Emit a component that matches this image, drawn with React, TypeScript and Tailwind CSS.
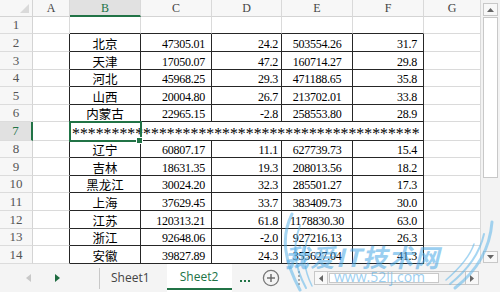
import React from "react";

const W = [
  "w-[33px]",
  "w-[37px]",
  "w-[71px]",
  "w-[71px]",
  "w-[70px]",
  "w-[71px]",
  "w-[71px]",
  "w-[57px]",
];
const HEIGHTS = [17, 18, 18, 17, 18, 17, 19, 17, 18, 17, 18, 18, 17, 18];
const HCLS: Record<number, string> = {
  17: "h-[17px]",
  18: "h-[18px]",
  19: "h-[19px]",
};

type Row = [string, string, string, string, string];
const TOP: Row[] = [
  ["北京", "47305.01", "24.2", "503554.26", "31.7"],
  ["天津", "17050.07", "47.2", "160714.27", "29.8"],
  ["河北", "45968.25", "29.3", "471188.65", "35.8"],
  ["山西", "20004.80", "26.7", "213702.01", "33.8"],
  ["内蒙古", "22965.15", "-2.8", "258553.80", "28.9"],
];
const BOTTOM: Row[] = [
  ["辽宁", "60807.17", "11.1", "627739.73", "15.4"],
  ["吉林", "18631.35", "19.3", "208013.56", "18.2"],
  ["黑龙江", "30024.20", "32.3", "285501.27", "17.3"],
  ["上海", "37629.45", "33.7", "383409.73", "30.0"],
  ["江苏", "120313.21", "61.8", "1178830.30", "63.0"],
  ["浙江", "92648.06", "-2.0", "927216.13", "26.3"],
  ["安徽", "39827.89", "24.3", "355627.04", "41.3"],
];

const SERIF = { fontFamily: '"Liberation Serif", "Times New Roman", serif' };
const CJK = { fontFamily: '"Noto Sans CJK SC", "Noto Sans", sans-serif' };
const UI = { fontFamily: '"Open Sans", "Noto Sans", sans-serif' };

function rowData(r: number): Row | null {
  if (r >= 2 && r <= 6) return TOP[r - 2];
  if (r >= 8 && r <= 14) return BOTTOM[r - 8];
  return null;
}

function HeaderRow() {
  const letters = ["A", "B", "C", "D", "E", "F", "G"];
  return (
    <div className="flex h-[17px]">
      <div className="relative w-[33px] shrink-0 border-r border-b border-[#d4d4d4] bg-[#f7f7f7]">
        <svg className="absolute right-[3px] bottom-[3px]" width="9" height="9" viewBox="0 0 9 9">
          <polygon points="9,0 9,9 0,9" fill="#dadada" />
        </svg>
      </div>
      {letters.map((l, i) => {
        const sel = l === "B";
        return (
          <div
            key={l}
            className={`${W[i + 1]} shrink-0 flex items-center justify-center text-[12px] border-r border-[#d9d9d9] ${
              sel
                ? "bg-[#e1e1e1] text-[#217346] border-b-2 border-b-[#217346]"
                : "bg-[#f7f7f7] text-[#444] border-b border-b-[#d4d4d4]"
            }`}
            style={SERIF}
          >
            {l}
          </div>
        );
      })}
    </div>
  );
}

const GRID_R = "border-r-[#dadada]";
const GRID_B = "border-b-[#dadada]";
const BLK_R = "border-r-[#262626]";
const BLK_B = "border-b-[#262626]";

function RowHeader({ r, h }: { r: number; h: string }) {
  const sel = r === 7;
  return (
    <div
      className={`${h} w-[33px] shrink-0 flex items-center justify-center text-[13px] border-b border-b-[#dcdcdc] ${
        sel
          ? "bg-[#e1e1e1] text-[#217346] border-r-2 border-r-[#217346]"
          : "bg-[#f7f7f7] text-[#555] border-r border-r-[#d4d4d4]"
      }`}
      style={SERIF}
    >
      {r}
    </div>
  );
}

function DataRow({ r }: { r: number }) {
  const h = HCLS[HEIGHTS[r - 1]];
  const d = rowData(r);
  const inTable = r >= 2 && r <= 14;

  if (r === 7) {
    return (
      <div className={`flex ${h}`}>
        <RowHeader r={r} h={h} />
        <div className={`${W[1]} shrink-0 bg-white border-r border-b ${BLK_R} ${GRID_B}`} />
        <div className={`relative w-[354px] shrink-0 bg-white border-r border-b ${BLK_R} ${BLK_B}`}>
          <div
            className="whitespace-nowrap pl-[2px] pt-[4px] text-[15.8px] leading-[16px] text-black"
            style={SERIF}
          >
            {"*".repeat(44)}
          </div>
          <div className="pointer-events-none absolute left-[-1px] top-[-1px] z-10 h-[21px] w-[73px] border-2 border-[#217346]" />
          <div className="absolute left-[66px] top-[15px] z-20 h-[7px] w-[7px] border border-white bg-[#217346]" />
        </div>
        <div className={`${W[7]} shrink-0 bg-white border-r border-b ${GRID_R} ${GRID_B}`} />
      </div>
    );
  }

  const cells = [];
  for (let c = 1; c <= 7; c++) {
    const rightBlack = inTable && c >= 1 && c <= 6;
    const bottomBlack = r >= 1 && r <= 14 && c >= 2 && c <= 6;
    const base = `${W[c]} shrink-0 bg-white border-r border-b ${rightBlack ? BLK_R : GRID_R} ${
      bottomBlack ? BLK_B : GRID_B
    } flex items-center pt-[2px] text-black whitespace-nowrap overflow-hidden`;
    let content: React.ReactNode = null;
    let extra = "";
    let style: React.CSSProperties | undefined;
    if (d && c >= 2 && c <= 6) {
      const v = d[c - 2];
      content = v;
      if (c === 2) {
        extra = "justify-center text-[12.5px] leading-[14px]";
        style = CJK;
      } else if (c === 5) {
        extra = "justify-center text-[12px] tracking-[-0.25px] leading-[14px]";
        style = SERIF;
      } else if (c === 4) {
        extra = "justify-end pr-[3px] text-[12px] tracking-[-0.25px] leading-[14px]";
        style = SERIF;
      } else {
        extra = "justify-end pr-[6px] text-[12px] tracking-[-0.25px] leading-[14px]";
        style = SERIF;
      }
    }
    cells.push(
      <div key={c} className={`${base} ${extra}`} style={style}>
        {content}
      </div>
    );
  }
  return (
    <div className={`flex ${h}`}>
      <RowHeader r={r} h={h} />
      {cells}
    </div>
  );
}

function VScroll() {
  return (
    <div className="flex h-[264px] w-[19px] shrink-0 flex-col bg-[#f3f3f3] px-[2px] pt-[3px] pb-[1px]">
      <div className="flex h-[13px] items-center justify-center border border-[#c8c8c8] bg-[#f8f8f8]">
        <svg width="7" height="4" viewBox="0 0 7 4">
          <polygon points="0,4 7,4 3.5,0" fill="#666" />
        </svg>
      </div>
      <div className="mt-[1px] h-[161px] border border-[#c8c8c8] bg-white" />
      <div className="flex-1" />
      <div className="flex h-[12px] items-center justify-center border border-[#c8c8c8] bg-[#f8f8f8]">
        <svg width="7" height="4" viewBox="0 0 7 4">
          <polygon points="0,0 7,0 3.5,4" fill="#666" />
        </svg>
      </div>
    </div>
  );
}

function TabBar() {
  return (
    <div className="flex h-[28px] items-center bg-[#f4f4f4]" style={UI}>
      <div className="flex w-[99px] items-center">
        <svg className="ml-[26px]" width="5" height="8" viewBox="0 0 5 8">
          <polygon points="5,0 5,8 0,4" fill="#c8c8c8" />
        </svg>
        <svg className="ml-[24px]" width="5" height="8" viewBox="0 0 5 8">
          <polygon points="0,0 0,8 5,4" fill="#1e6b40" />
        </svg>
      </div>
      <div className="h-[21px] w-px bg-[#c8c8c8]" />
      <div className="ml-[11px] text-[12px] text-[#444]">Sheet1</div>
      <div className="ml-[17px] flex h-[28px] w-[65px] flex-col items-center justify-center bg-white">
        <div className="mt-[1px] text-[12px] text-[#217346]">Sheet2</div>
        <div className="mt-[2px] h-[2px] w-[65px] bg-[#217346]" />
      </div>
      <div className="ml-[8px] flex gap-[2px] pt-[6px]">
        <div className="h-[2px] w-[2px] bg-[#217346]" />
        <div className="h-[2px] w-[2px] bg-[#217346]" />
        <div className="h-[2px] w-[2px] bg-[#217346]" />
      </div>
      <svg className="ml-[12px]" width="18" height="18" viewBox="0 0 18 18">
        <circle cx="9" cy="9" r="7.6" fill="none" stroke="#777" strokeWidth="1.3" />
        <line x1="9" y1="5" x2="9" y2="13" stroke="#666" strokeWidth="1.4" />
        <line x1="5" y1="9" x2="13" y2="9" stroke="#666" strokeWidth="1.4" />
      </svg>
      <div className="ml-[18px] flex flex-col gap-[2px]">
        <div className="h-[2px] w-[2px] bg-[#aaa]" />
        <div className="h-[2px] w-[2px] bg-[#aaa]" />
        <div className="h-[2px] w-[2px] bg-[#aaa]" />
        <div className="h-[2px] w-[2px] bg-[#aaa]" />
      </div>
      <div className="ml-[14px] flex h-[14px] w-[165px] items-stretch border border-[#c8c8c8] bg-[#f0f0f0]">
        <div className="flex w-[13px] items-center justify-center border-r border-[#c8c8c8] bg-[#f8f8f8]">
          <svg width="4" height="7" viewBox="0 0 4 7">
            <polygon points="4,0 4,7 0,3.5" fill="#666" />
          </svg>
        </div>
        <div className="my-[1px] ml-[1px] w-[110px] border border-[#c8c8c8] bg-white" />
        <div className="flex-1" />
        <div className="flex w-[13px] items-center justify-center border-l border-[#c8c8c8] bg-[#f8f8f8]">
          <svg width="4" height="7" viewBox="0 0 4 7">
            <polygon points="0,0 0,7 4,3.5" fill="#666" />
          </svg>
        </div>
      </div>
    </div>
  );
}

function Watermark() {
  return (
    <div className="pointer-events-none absolute inset-0 z-30">
      <svg className="absolute left-0 top-0" width="500" height="292" viewBox="0 0 500 292">
        <g fill="none" stroke="#5fb6ea" strokeLinecap="round" opacity="0.55">
          <path d="M300 290 C 285 262, 280 238, 292 214" strokeWidth="3" />
          <path d="M306 288 C 294 266, 292 246, 300 226" strokeWidth="2" />
          <path d="M312 286 C 304 270, 302 254, 308 238" strokeWidth="1.5" />
          <path d="M455 288 C 478 270, 490 248, 492 222" strokeWidth="3" />
          <path d="M450 284 C 470 268, 480 252, 484 234" strokeWidth="2" />
          <path d="M446 280 C 462 266, 470 256, 474 244" strokeWidth="1.5" />
        </g>
      </svg>
      <div
        className="absolute left-[284px] top-[243px] text-[25px] font-bold italic leading-[26px] tracking-[1px] text-[#4aa8e6] opacity-55"
        style={CJK}
      >
        我爱IT技术网
      </div>
      <div
        className="absolute left-[334px] top-[269px] text-[14px] leading-[16px] text-[#4aa8e6] opacity-55"
        style={UI}
      >
        www.52ij.com
      </div>
    </div>
  );
}

export default function App() {
  const rows = [];
  for (let r = 1; r <= 14; r++) rows.push(<DataRow key={r} r={r} />);
  return (
    <div className="relative h-[292px] w-[500px] overflow-hidden bg-white">
      <div className="flex h-[264px]">
        <div className="w-[481px] shrink-0 overflow-hidden">
          <HeaderRow />
          {rows}
        </div>
        <VScroll />
      </div>
      <TabBar />
      <Watermark />
    </div>
  );
}
